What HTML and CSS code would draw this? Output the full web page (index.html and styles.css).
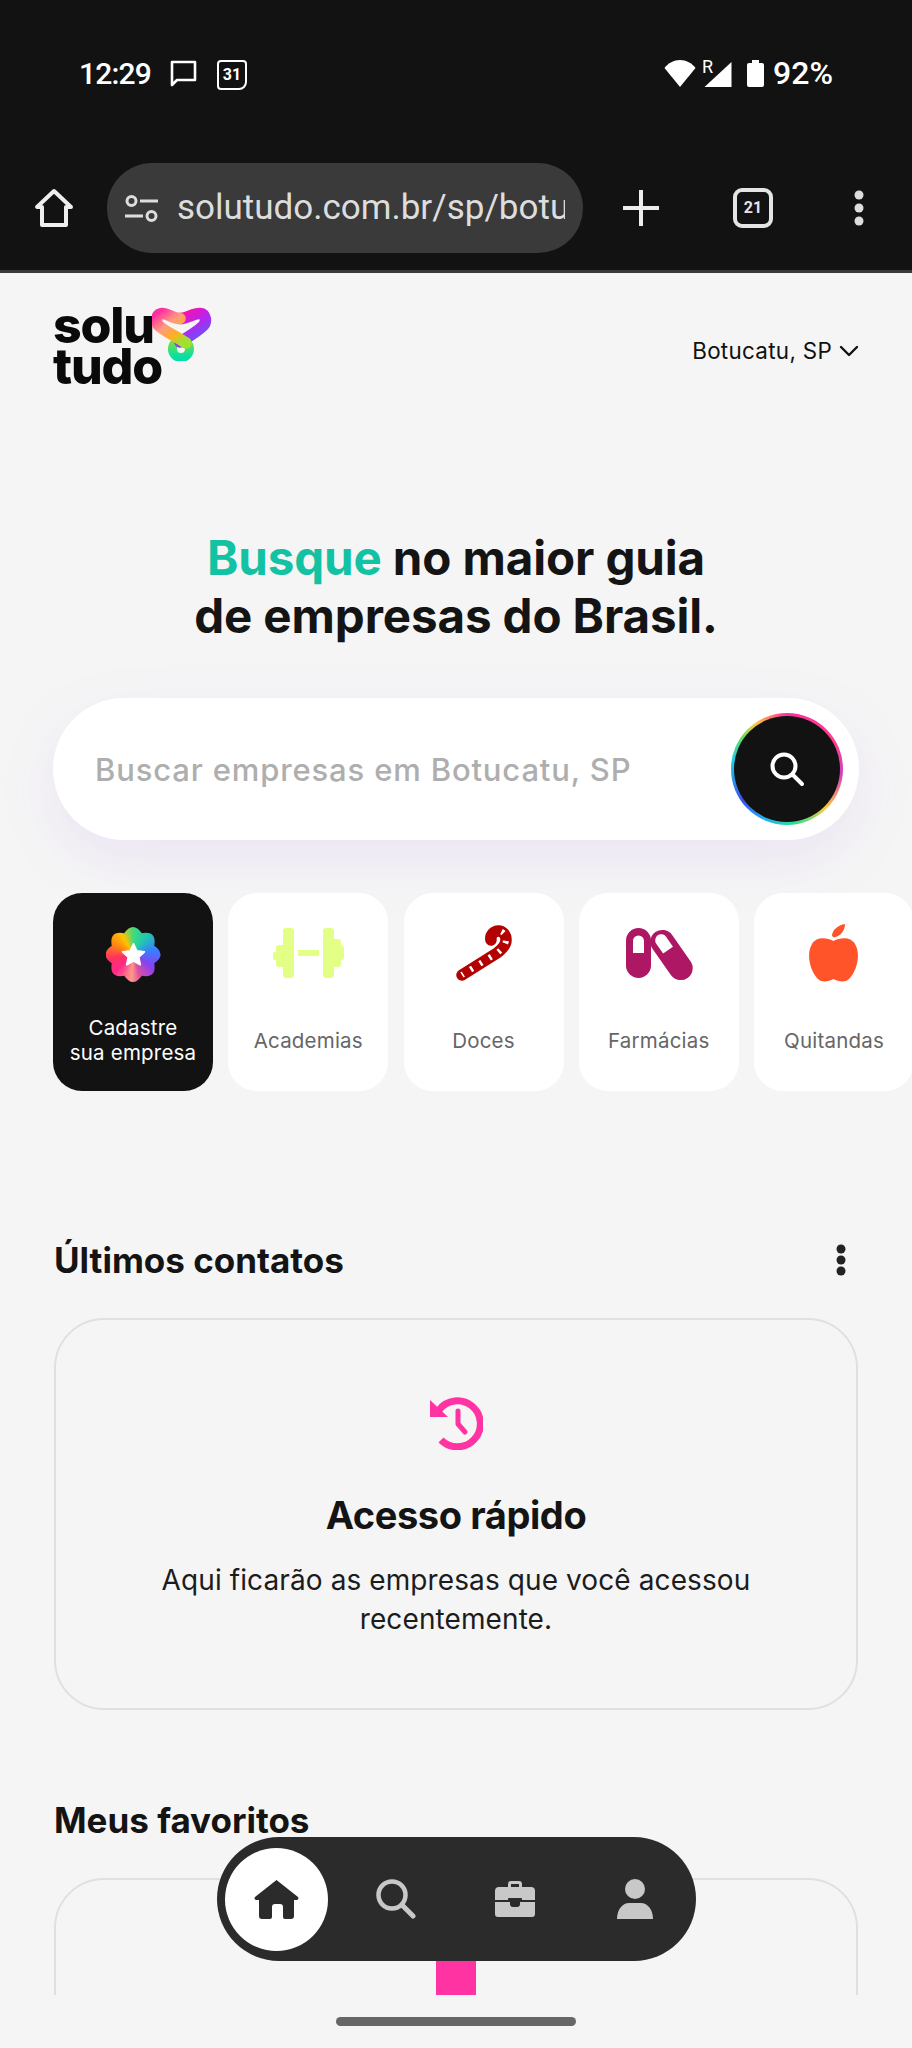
FILE: index.html
```html
<!DOCTYPE html>
<html lang="pt-BR">
<head>
<meta charset="utf-8">
<title>Solutudo</title>
<link rel="stylesheet" href="styles.css">
</head>
<body>
<div class="screen">
  <header class="chrome">
    <div class="status">
      <span class="time">12:29</span>
      <svg class="st-chat" viewBox="0 0 27 27"><path d="M2 2h23v18H7l-5 5z" fill="none" stroke="#fff" stroke-width="2.6" stroke-linejoin="round"/></svg>
      <span class="st-cal">31</span>
      <span class="st-gap"></span>
      <svg class="st-wifi" viewBox="0 0 32 27"><path d="M16 27 0.5 8C4 3 10 0 16 0s12 3 15.500 8z" fill="#fff"/></svg>
      <span class="st-sig"><span class="st-r">R</span><svg viewBox="0 0 27 25"><path d="M27 0v25H0z" fill="#fff"/></svg></span>
      <svg class="st-bat" viewBox="0 0 17 27"><path d="M5 0h7v3h3a2 2 0 0 1 2 2v20a2 2 0 0 1-2 2H2a2 2 0 0 1-2-2V5a2 2 0 0 1 2-2h3z" fill="#fff"/></svg>
      <span class="pct">92%</span>
    </div>
    <div class="toolbar">
      <svg class="tb-home" viewBox="0 0 40 40"><path d="M20 3 3 19h5v18h24V19h5z" fill="none" stroke="#eee" stroke-width="4" stroke-linejoin="round"/></svg>
      <div class="url">
        <svg class="tb-tune" viewBox="0 0 33 27"><g fill="none" stroke="#ddd" stroke-width="3"><circle cx="6.500" cy="6" r="4.500"/><circle cx="26.500" cy="21" r="4.500"/><path d="M15 6h18M0 21h18"/></g></svg>
        <span class="url-text">solutudo.com.br/sp/botucatu</span>
      </div>
      <svg class="tb-plus" viewBox="0 0 36 36"><path d="M18 0v36M0 18h36" stroke="#eee" stroke-width="4"/></svg>
      <span class="tabs">21</span>
      <svg class="tb-dots" viewBox="0 0 10 36"><circle cx="5" cy="5" r="4.500" fill="#ddd"/><circle cx="5" cy="18" r="4.500" fill="#ddd"/><circle cx="5" cy="31" r="4.500" fill="#ddd"/></svg>
    </div>
  </header>

  <main class="page">
    <div class="topbar">
      <div class="logo">
        <span class="logo-text">solu<br>tudo</span>
        <svg class="logo-mark" viewBox="0 0 60 54">
          <defs>
            <linearGradient id="lg1" x1="0" y1="0" x2="0.800" y2="1"><stop offset="0" stop-color="#ff2da0"/><stop offset=".4" stop-color="#ff9a80"/><stop offset=".75" stop-color="#ffb020"/><stop offset="1" stop-color="#9fe030"/></linearGradient>
            <linearGradient id="lg2" x1="0" y1="0" x2="0.600" y2="1"><stop offset="0" stop-color="#ff10a0"/><stop offset=".45" stop-color="#c020e8"/><stop offset="1" stop-color="#6a50ff"/></linearGradient>
            <linearGradient id="lg3" x1="0" y1="0" x2="0" y2="1"><stop offset="0" stop-color="#80e040"/><stop offset="1" stop-color="#00dfa8"/></linearGradient>
          </defs>
          <circle cx="29" cy="42" r="8.500" fill="none" stroke="url(#lg3)" stroke-width="9"/>
          <path d="M28 11.500C36 11.500 41 6 48 6.500 54 7 55 15 51 19 46 24 38 29 28 35" fill="none" stroke="url(#lg2)" stroke-width="11.500" stroke-linecap="round"/>
          <path d="M28 11.500C20 11.500 16 6 10 6.500 4 7 3 15 7 19 12 24 24 29 34 36" fill="none" stroke="url(#lg1)" stroke-width="11.500" stroke-linecap="round"/>
        </svg>
      </div>
      <div class="loc">Botucatu, SP <svg class="chev" viewBox="0 0 20 12"><path d="M2 2l8 8 8-8" fill="none" stroke="#111" stroke-width="2.400" stroke-linecap="round" stroke-linejoin="round"/></svg></div>
    </div>

    <h1 class="hero"><span class="accent">Busque</span> no maior guia<br>de empresas do Brasil.</h1>

    <div class="search">
      <span class="placeholder">Buscar empresas em Botucatu, SP</span>
      <div class="search-btn">
        <div class="search-core">
          <svg class="search-ico" viewBox="0 0 36 36"><circle cx="15" cy="15" r="11.500" fill="none" stroke="#fff" stroke-width="4"/><path d="M24 24l9 9" stroke="#fff" stroke-width="4" stroke-linecap="round"/></svg>
        </div>
      </div>
    </div>

    <div class="cats">
      <div class="cat cat-dark">
        <div class="badge"><svg class="badge-star" viewBox="0 0 24 24"><path d="M12 2.500l2.900 6.300 6.800.8-5 4.700 1.300 6.800-6-3.400-6 3.400 1.300-6.800-5-4.700 6.800-.8z" fill="#fff" stroke="#fff" stroke-width="1.500" stroke-linejoin="round"/></svg></div>
        <span class="cat-label-dark">Cadastre<br>sua empresa</span>
      </div>
      <div class="cat">
        <svg class="ico-bell" viewBox="0 0 71 50"><path fill="#e4ff85" d="M25 22h21v6H25zM13 0h5a3 3 0 0 1 3 3v44a3 3 0 0 1-3 3h-5a3 3 0 0 1-3-3v-8H6a3 3 0 0 1-3-3v-4H2a2 2 0 0 1-2-2v-4a2 2 0 0 1 2-2h1v-4a3 3 0 0 1 3-3h4V3a3 3 0 0 1 3-3zM53 0h5a3 3 0 0 1 3 3v8h4a3 3 0 0 1 3 3v4h1a2 2 0 0 1 2 2v10a2 2 0 0 1-2 2h-1v4a3 3 0 0 1-3 3h-4v8a3 3 0 0 1-3 3h-5a3 3 0 0 1-3-3V3a3 3 0 0 1 3-3z"/></svg>
        <span class="cat-label">Academias</span>
      </div>
      <div class="cat">
        <svg class="ico-cane" viewBox="0 0 57 57"><path d="M36 15C35 10 39 6 43.500 6 48 6 51 10 51 15 51 20 46 25 42 28L7 50" fill="none" stroke="#b30000" stroke-width="11.500" stroke-linecap="round" stroke-linejoin="round"/><path d="M43.500 6C48 6 51 10 51 15 51 20 46 25 42 28L7 50" fill="none" stroke="#fff" stroke-width="6" stroke-dasharray="2.500 8.500" stroke-dashoffset="-3"/></svg>
        <span class="cat-label">Doces</span>
      </div>
      <div class="cat">
        <svg class="ico-pills" viewBox="0 0 66 51"><rect width="25" height="50" rx="12.500" fill="#ad1763"/><path d="M7 25V13a5.500 5.500 0 0 1 11 0v12z" fill="#fff"/><g transform="rotate(-35 45.500 27)"><rect x="33.500" y="-1" width="24" height="56" rx="12" fill="#ad1763"/><path d="M39.500 21V9a6 6 0 0 1 12 0v12z" fill="#fff"/></g></svg>
        <span class="cat-label">Farmácias</span>
      </div>
      <div class="cat">
        <svg class="ico-apple" viewBox="0 0 51 58"><path fill="#ff5329" d="M25.500 17C18 13 8 13 4 20c-6 10-2 26 5 34 4 5 11 4 16.500 1C31 58 38 59 42 54c7-8 11-24 5-34-4-7-14-7-21.500-3z"/><path fill="#ff5329" d="M24 12C24 6 30 1 37 0c0 6-4 12-11 13.500z"/></svg>
        <span class="cat-label">Quitandas</span>
      </div>
    </div>

    <section class="sec sec-first">
      <div class="sec-head">
        <h2 class="sec-title">Últimos contatos</h2>
        <svg class="sec-dots" viewBox="0 0 10 32"><circle cx="5" cy="5" r="4.500" fill="#222"/><circle cx="5" cy="16" r="4.500" fill="#222"/><circle cx="5" cy="27" r="4.500" fill="#222"/></svg>
      </div>
      <div class="panel">
        <svg class="ico-hist" viewBox="0 0 54 54"><path d="M10 14A23 23 0 1 1 12 44" fill="none" stroke="#ff33a1" stroke-width="7"/><path d="M1 4 19 21H1z" fill="#ff33a1"/><path d="M29 15v13l7 8" fill="none" stroke="#ff33a1" stroke-width="5" stroke-linecap="round" stroke-linejoin="round"/></svg>
        <h3 class="panel-title">Acesso rápido</h3>
        <p class="panel-text">Aqui ficarão as empresas que você acessou recentemente.</p>
      </div>
    </section>

    <section class="sec sec-fav">
      <div class="sec-head"><h2 class="sec-title">Meus favoritos</h2></div>
      <div class="panel panel-fav"><span class="pink"></span></div>
    </section>
  </main>

  <div class="gesture"><span class="gesture-bar"></span></div>

  <nav class="nav">
    <span class="nav-item nav-active"><svg class="nav-home" viewBox="0 0 45 39"><path fill="#2b2b2b" d="M22.500 0 44 17a1.800 1.800 0 0 1-1 3h-3v16a3 3 0 0 1-3 3h-6a2 2 0 0 1-2-2V27a3 3 0 0 0-3-3h-5a3 3 0 0 0-3 3v10a2 2 0 0 1-2 2H8a3 3 0 0 1-3-3V20H2a1.800 1.800 0 0 1-1-3z"/></svg></span>
    <span class="nav-item"><svg class="nav-ico" viewBox="0 0 40 40"><circle cx="16" cy="16" r="13.500" fill="none" stroke="#c8c8c8" stroke-width="4.500"/><path d="M26 26l11 11" stroke="#c8c8c8" stroke-width="5" stroke-linecap="round"/></svg></span>
    <span class="nav-item"><svg class="nav-ico" viewBox="0 0 40 38"><path fill="#c8c8c8" fill-rule="evenodd" d="M13 7V4a3 3 0 0 1 3-3h8a3 3 0 0 1 3 3v3h9a4 4 0 0 1 4 4v9H27v-1a1 1 0 0 0-1-1h-12a1 1 0 0 0-1 1v1H0v-9a4 4 0 0 1 4-4zm3-3v3h8V4zM0 22h15v2a3 3 0 0 0 3 3h4a3 3 0 0 0 3-3v-2h15v12a3 3 0 0 1-3 3H3a3 3 0 0 1-3-3z"/></svg></span>
    <span class="nav-item"><svg class="nav-person" viewBox="0 0 36 40"><circle cx="18" cy="10" r="10" fill="#c8c8c8"/><path fill="#c8c8c8" d="M0 40c0-10 6-16 12-16h12c6 0 12 6 12 16z"/></svg></span>
  </nav>
</div>
</body>
</html>
```
FILE: styles.css
```css
* { box-sizing: border-box; }
html, body { margin: 0; padding: 0; }
body { background: #f5f5f5; font-family: Inter, "Liberation Sans", sans-serif; color: #121212; }
.screen { position: relative; width: 912px; height: 2048px; overflow: hidden; background: #f5f5f5; }

.chrome { height: 273px; background: #121212; border-bottom: 3px solid #3a3a3a; font-family: Roboto, sans-serif; color: #fff; }
.status { height: 163px; padding: 60px 79px 0 79px; display: flex; align-items: flex-start; }
.time { font-size: 30px; font-weight: 500; line-height: 27px; width: 70px; letter-spacing: -.8px; }
.st-chat { width: 27px; height: 27px; margin-left: 21px; }
.st-cal { width: 30px; height: 30px; margin-left: 20px; border: 2.500px solid #fff; border-radius: 4px 4px 8px 4px; font-size: 16px; font-weight: 700; line-height: 25px; text-align: center; }
.st-gap { flex: 1; }
.st-wifi { width: 32px; height: 27px; }
.st-sig { position: relative; width: 28px; height: 27px; margin-left: 8px; display: flex; align-items: flex-end; }
.st-sig svg { width: 28px; height: 25px; }
.st-r { position: absolute; left: -2px; top: -1px; font-size: 18px; line-height: 15px; }
.st-bat { width: 17px; height: 27px; margin-left: 15px; }
.pct { font-size: 32px; font-weight: 500; line-height: 27px; margin-left: 9px; }

.toolbar { height: 90px; display: flex; align-items: center; padding-left: 34px; }
.tb-home { width: 40px; height: 40px; }
.url { width: 476px; height: 90px; margin-left: 33px; padding: 0 18px 0 18px; border-radius: 45px; background: #3a3a3a; display: flex; align-items: center; overflow: hidden; }
.tb-tune { width: 33px; height: 27px; flex: none; }
.url-text { margin-left: 19px; width: 388px; flex: none; overflow: hidden; white-space: nowrap; font-size: 35px; line-height: 44px; color: #ddd; }
.tb-plus { width: 36px; height: 36px; margin-left: 40px; }
.tabs { width: 40px; height: 40px; margin-left: 74px; border: 4px solid #e4e4e4; border-radius: 9px; font-size: 16px; font-weight: 700; line-height: 32px; text-align: center; color: #e4e4e4; }
.tb-dots { width: 10px; height: 36px; margin-left: 81px; }

.page { height: 1722px; overflow: hidden; }
.topbar { height: 83px; margin-top: 32px; padding: 0 54px 0 53px; display: flex; justify-content: space-between; align-items: center; }
.logo { position: relative; display: flex; width: 160px; height: 83px; }
.logo-text { font-size: 50px; font-weight: 800; line-height: 41px; letter-spacing: -1.200px; color: #0a0a0a; }
.logo-mark { position: absolute; left: 99px; top: 2px; width: 60px; height: 54px; }
.loc { display: flex; align-items: center; gap: 7px; font-size: 22.400px; line-height: 28px; color: #111; margin-top: 8px; margin-right: -1px; letter-spacing: .3px; }
.chev { width: 20px; height: 12px; }

.hero { margin: 141px 0 0; text-align: center; font-size: 47.500px; line-height: 58px; font-weight: 700; letter-spacing: -.1px; color: #141414; }
.accent { color: #12c2a3; }

.search { margin: 53px 53px 0; height: 142px; padding: 0 16px 0 42px; border-radius: 71px; background: #fff; box-shadow: 0 20px 60px rgba(160, 90, 240, .1); display: flex; align-items: center; justify-content: space-between; }
.placeholder { font-size: 31px; font-weight: 500; color: #aeaeae; letter-spacing: .85px; white-space: nowrap; }
.search-btn { width: 112px; height: 112px; padding: 3px; border-radius: 50%; background: conic-gradient(#ff2da0 0deg, #ff3d8f 60deg, #d040c0 95deg, #ffc83a 135deg, #30e090 170deg, #20b0f0 205deg, #3a50f0 235deg, #20d0e0 280deg, #60e060 305deg, #ffc83a 325deg, #ff2da0 360deg); }
.search-core { width: 106px; height: 106px; border-radius: 50%; background: #121212; display: flex; align-items: center; justify-content: center; }
.search-ico { width: 36px; height: 36px; }

.cats { margin: 53px 0 0 53px; display: flex; gap: 15.250px; width: 880px; }
.cat { flex: none; width: 160px; height: 198px; border-radius: 29px; background: #fff; display: flex; flex-direction: column; align-items: center; position: relative; padding-top: 32px; }
.cat-label { position: absolute; left: 0; right: 0; top: 134px; text-align: center; font-size: 20.500px; line-height: 28px; color: #666; letter-spacing: .2px; }
.cat-dark { background: #121212; }
.cat-label-dark { position: absolute; left: 0; right: 0; top: 122px; text-align: center; font-size: 20.500px; line-height: 25px; color: #fff; letter-spacing: .2px; }
.badge { width: 55px; height: 55px; margin-top: 2px; display: flex; align-items: center; justify-content: center; background: conic-gradient(#3fd97f 0deg, #20c8b0 35deg, #3a7bff 80deg, #8a40f0 125deg, #e050a0 165deg, #ff9a8a 185deg, #ff2a8a 225deg, #ff3060 260deg, #ff8a10 300deg, #ffc400 330deg, #3fd97f 360deg); clip-path: path("M18.700 6.250Q27.500 -6.300 36.300 6.250Q51.400 3.600 48.750 18.700Q61.300 27.500 48.750 36.300Q51.400 51.400 36.300 48.750Q27.500 61.300 18.700 48.750Q3.600 51.400 6.250 36.300Q-6.300 27.500 6.250 18.700Q3.600 3.600 18.700 6.250Z"); }
.badge-star { width: 27px; height: 27px; }
.ico-bell { width: 71px; height: 50px; margin-top: 3px; }
.ico-cane { width: 57px; height: 57px; }
.ico-pills { width: 66px; height: 51px; margin-top: 3px; overflow: visible; }
.ico-apple { width: 51px; height: 58px; margin-top: -1px; margin-left: -2px; }

.sec-first { margin-top: 144px; }
.sec { padding: 0 54px; }
.sec-head { height: 50px; display: flex; align-items: center; justify-content: space-between; }
.sec-title { margin: 0; font-size: 35px; line-height: 50px; font-weight: 700; letter-spacing: 0; color: #141414; }
.sec-dots { width: 10px; height: 32px; margin-right: 12px; }
.panel { margin-top: 33px; height: 392px; border: 2px solid #e0e0e0; border-radius: 50px; display: flex; flex-direction: column; align-items: center; padding-top: 76px; }
.ico-hist { width: 54px; height: 54px; }
.panel-title { margin: 40px 0 0; font-size: 38px; line-height: 50px; font-weight: 700; letter-spacing: -.4px; color: #141414; }
.panel-text { margin: 21px 0 0; width: 640px; text-align: center; font-size: 28px; line-height: 39px; color: #1c1c1c; letter-spacing: .1px; }
.sec-fav { margin-top: 85px; }
.panel-fav { margin-top: 33px; position: relative; }
.pink { position: absolute; left: 380px; top: 78px; width: 40px; height: 40px; background: #ff33a1; }

.gesture { height: 53px; display: flex; justify-content: center; padding-top: 22px; }
.gesture-bar { width: 240px; height: 9px; border-radius: 5px; background: #666; }

.nav { position: absolute; left: 217px; top: 1837px; width: 479px; height: 124px; border-radius: 62px; background: #2b2b2b; display: flex; align-items: center; padding-left: 8px; }
.nav-item { flex: none; width: 119.500px; display: flex; justify-content: center; }
.nav-active { width: 103px; height: 103px; margin-right: 8px; border-radius: 50%; background: #fff; align-items: center; }
.nav-home { width: 45px; height: 39px; }
.nav-ico { width: 40px; height: 40px; }
.nav-person { width: 36px; height: 40px; }
```
